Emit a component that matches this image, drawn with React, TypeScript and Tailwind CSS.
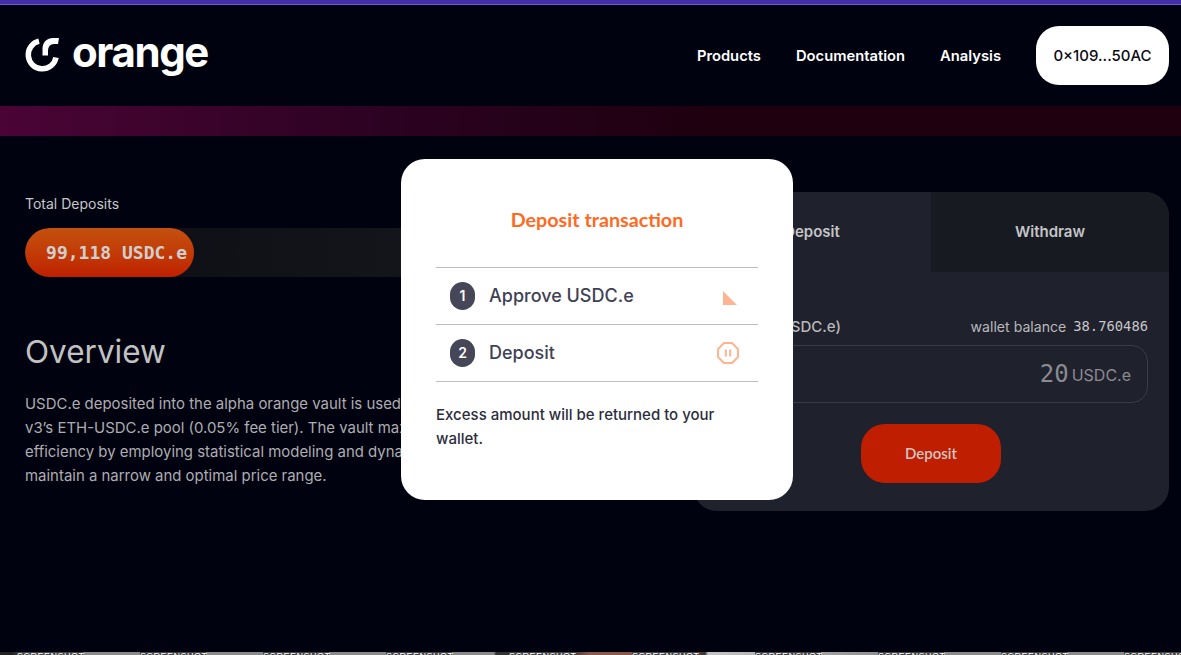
import React from "react";

const sans = "font-['Inter',sans-serif]";
const mono = "font-['DejaVu_Sans_Mono',monospace]";

const Logo = () => (
  <div className="flex items-center gap-[11px]">
    <svg width="36" height="36" viewBox="0 0 36 36" fill="none" className="-mt-[2px]">
      <path d="M14 4.2 A 14 14 0 1 0 31 20.5" stroke="#fff" strokeWidth="5.5" strokeLinecap="butt" />
      <path d="M34 1 H28 C21 1 17.5 6 17.5 12 V 18.5 H 23 V 14 C 23 10 25 7 29 7 H 33 Z" fill="#fff" />
    </svg>
    <span className="text-[42px] leading-none font-bold text-white tracking-[-1.4px] -mt-[8px]">orange</span>
  </div>
);

const Header = () => (
  <header className="h-[101px] flex items-center justify-between pl-[25px] pr-3 shrink-0">
    <Logo />
    <nav className="flex items-center text-white text-[14.75px] font-semibold">
      <a className="mr-[35px] mt-[2px]">Products</a>
      <a className="mr-[35px] mt-[2px]">Documentation</a>
      <a className="mr-[35px] mt-[2px]">Analysis</a>
      <button className="h-[59px] w-[133px] pt-[2px] bg-white rounded-[23px] text-[#0b0b14] text-[15px] font-medium">0×109...50AC</button>
    </nav>
  </header>
);

const Step = ({ n, label, children }: { n: number; label: string; children: React.ReactNode }) => (
  <div className="h-[57px] border-b border-[#bdbcc6] flex items-center pl-[14px] pr-[18px]">
    <span className="w-[25px] h-[28px] rounded-full bg-[#454657] text-white text-sm font-semibold flex items-center justify-center">{n}</span>
    <span className="ml-[14px] text-lg text-[#3f4155] font-[450]">{label}</span>
    <span className="ml-auto w-[24px] h-[24px] flex items-center justify-center">{children}</span>
  </div>
);

const Modal = () => (
  <div className="absolute left-[401px] top-[159px] w-[392px] h-[341px] bg-white rounded-[24px] px-[35px] pt-[48px] z-10">
    <h2 className="text-center font-['Lato',sans-serif] font-bold text-[19.7px] leading-[26px] text-[#ff6a1f]">Deposit transaction</h2>
    <div className="mt-[34px] border-t border-[#bdbcc6]">
      <Step n={1} label="Approve USDC.e">
        <svg width="14" height="14" viewBox="0 0 14 14" className="mt-[4px] ml-[3px]"><path d="M0 0 L14 14 H0 Z" fill="#ffb492" /></svg>
      </Step>
      <Step n={2} label="Deposit">
        <svg width="22" height="22" viewBox="0 0 22 22" fill="none" stroke="#ffb492" strokeWidth="2">
          <path d="M7 1 H15 L21 7 V15 L15 21 H7 L1 15 V7 Z" strokeLinejoin="round" />
          <path d="M8.8 7.5 V14.5 M13.2 7.5 V14.5" />
        </svg>
      </Step>
    </div>
    <p className="mt-[21px] text-[15px] leading-[24px] text-[#2c2d3c] font-medium">Excess amount will be returned to your wallet.</p>
  </div>
);

const LeftColumn = () => (
  <section className="w-[640px] shrink-0 pt-[58px] text-[#bdbdc0]">
    <div className="text-sm leading-5 text-[#c6c6c8]">Total Deposits</div>
    <div className="mt-[14px] h-[49px] rounded-full bg-gradient-to-r from-[#0c0d12] to-[#1a1b20] flex overflow-hidden">
      <div className={`${mono} w-[169px] h-full rounded-full bg-gradient-to-b from-[#c4500f] to-[#bf1e00] flex items-center justify-end pr-[7px] text-[#cfcfcf] text-lg font-bold`}>99,118 USDC.e</div>
    </div>
    <h1 className="mt-[53px] text-[31.5px] leading-[44px] font-normal text-[#c2c2c4]">Overview</h1>
    <p className="mt-[18px] text-[14.95px] leading-6 text-[#adadb1]">
      USDC.e deposited into the alpha orange vault is used to provide liquidity in Uniswap<br />
      v3’s ETH-USDC.e pool (0.05% fee tier). The vault maximizes capital<br />
      efficiency by employing statistical modeling and dynamic rebalancing to<br />
      maintain a narrow and optimal price range.
    </p>
  </section>
);

const DepositCard = () => (
  <section className="mt-[56px] ml-[28px] w-[476px] h-[319px] rounded-[24px] bg-[#1f212c] overflow-hidden shrink-0">
    <div className="flex h-[80px] text-[15px] font-semibold text-[#c4c4c6]">
      <div className="w-[238px] flex items-center justify-center">Deposit</div>
      <div className="w-[238px] flex items-center justify-center bg-[#181a22]">Withdraw</div>
    </div>
    <div className="px-[21px] pt-[45px]">
      <div className="flex items-center justify-between text-[14.1px] leading-5 text-[#b9b9bc]">
        <span className="text-[15px] font-medium">Amount (USDC.e)</span>
        <span className="flex items-center gap-[7px]">
          wallet balance
          <span className={`${mono} text-[13.8px] font-medium text-[#c6c6c8] -mt-[3px]`}>38.760486</span>
        </span>
      </div>
      <div className="mt-[8px] h-[58px] rounded-[16px] border border-[#3a3c47] flex items-center justify-end pr-[16px] gap-[3px]">
        <span className={`${mono} text-[24px] text-[#8a8b92]`}>20</span>
        <span className="text-base text-[#8a8b92] mt-[2px]">USDC.e</span>
      </div>
      <div className="flex justify-center mt-[21px]">
        <button className="w-[140px] h-[59px] rounded-[24px] bg-[#bf1e00] text-[#cfc6c4] text-[15px] font-semibold font-['Lato',sans-serif]">Deposit</button>
      </div>
    </div>
  </section>
);

// sliver of the next window peeking in at the bottom edge
const BottomStrip = () => (
  <div className="h-[3px] shrink-0 overflow-hidden flex pl-[17px] bg-[linear-gradient(to_right,#222_0,#222_12px,#8a8a8a_40px,#8a8a8a_470px,#8a8a8a_494px,#333_496px,#333_570px,#8a5a50_590px,#8a5040_690px,#333_705px,#c4c4c4_708px,#8a8a8a_900px,#8a8a8a_100%)]">
    {Array.from({ length: 10 }, (_, i) => (
      <span key={i} className="w-[66px] mr-[57px] shrink-0 bg-[#444] font-['Liberation_Sans',sans-serif] text-[9px] leading-[9px] tracking-[0.5px] text-white">SCREENSHOT</span>
    ))}
  </div>
);

const App = () => (
  <div className={`${sans} relative h-[655px] w-[1181px] overflow-hidden bg-[#01020f] flex flex-col`}>
    <div className="h-[5px] shrink-0 bg-[#4330a8] border-b border-[#6a5cd0]" />
    <Header />
    <div className="h-[30px] shrink-0 bg-gradient-to-r from-[#4a0436] via-[#2a0220] via-35% to-[#1e000f] to-60%" />
    <main className="flex-1 flex pl-[25px]">
      <LeftColumn />
      <DepositCard />
    </main>
    <BottomStrip />
    <Modal />
  </div>
);

export default App;
